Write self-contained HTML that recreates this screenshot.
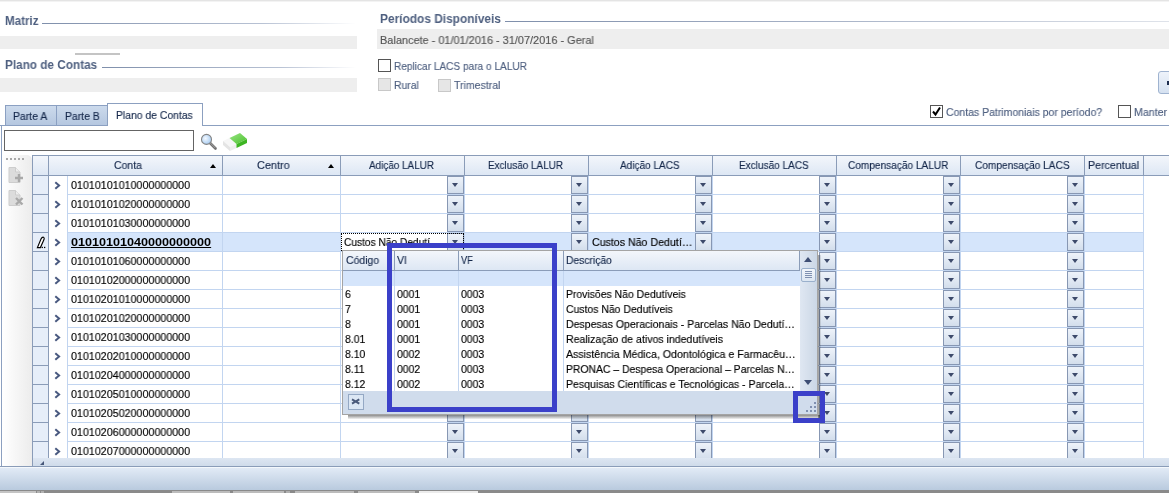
<!DOCTYPE html><html><head><meta charset="utf-8"><style>
*{margin:0;padding:0;box-sizing:border-box}
html,body{width:1169px;height:493px;overflow:hidden;background:#fff;font-family:"Liberation Sans",sans-serif;font-size:11px;color:#000;position:relative}
div,span,svg{position:absolute;white-space:nowrap}
.gl{height:1px;background:linear-gradient(to right,#7f8fab,#b8c2d4 70%,#fff)}
.bar{background:#eeeeee}
.cb{width:13px;height:13px;border:1px solid #555;background:#fff}
.cbd{width:13px;height:13px;border:1px solid #c8c8c8;background:#e6e6e6}
.tab{border:1px solid #8ba0c2;background:linear-gradient(#ccdaec,#b5c7e0)}
.hd{width:1px;height:19px;background:#8a9cb8}
.vl{width:1px;background:#c2d5f0}
.hl{height:1px;background:#c2d5f0}
.btn{width:17px;height:18px;border:1px solid #8797b3;background:linear-gradient(#eef3fa,#d3deec)}
.btn i{position:absolute;left:4px;top:6px;width:0;height:0;border-left:3.5px solid transparent;border-right:3.5px solid transparent;border-top:4px solid #3d4a6b}
</style></head><body>
<div style="left:0;top:0;width:1169px;height:1px;background:#e4e4e4"></div><div style="left:0;top:1px;width:1169px;height:1px;background:#f3f3f3"></div>
<div style="left:4.50px;top:11px;line-height:20px;font-size:12px;font-weight:bold;color:#4f6080;transform:scaleX(0.9663);transform-origin:0 0;will-change:transform;-webkit-text-stroke:0 #4f6080;">Matriz</div>
<div class="gl" style="left:42px;top:23px;width:314px"></div>
<div class="bar" style="left:0;top:36px;width:357px;height:13px"></div>
<div style="left:75px;top:53px;width:45px;height:2px;background:#c4c4c4"></div>
<div style="left:4.50px;top:55px;line-height:20px;font-size:12px;font-weight:bold;color:#4f6080;transform:scaleX(0.9805);transform-origin:0 0;will-change:transform;-webkit-text-stroke:0 #4f6080;">Plano de Contas</div>
<div class="gl" style="left:102px;top:67px;width:254px"></div>
<div class="bar" style="left:0;top:78px;width:357px;height:14px"></div>
<div style="left:379.60px;top:9px;line-height:20px;font-size:12px;font-weight:bold;color:#4f6080;transform:scaleX(0.9913);transform-origin:0 0;will-change:transform;-webkit-text-stroke:0 #4f6080;">Períodos Disponíveis</div>
<div class="gl" style="left:505px;top:21px;width:664px;background:linear-gradient(to right,#7f8fab,#a9b4c8 50%,#dfe3ea)"></div>
<div class="bar" style="left:377px;top:29px;width:792px;height:20px"></div>
<div style="left:379.60px;top:30px;line-height:20px;font-size:11px;font-weight:normal;color:#555;transform:scaleX(0.9934);transform-origin:0 0;will-change:transform;-webkit-text-stroke:0.15px #555;">Balancete - 01/01/2016 - 31/07/2016 - Geral</div>
<div class="cb" style="left:378px;top:59px"></div>
<div style="left:393.60px;top:56px;line-height:20px;font-size:11px;font-weight:normal;color:#4f6080;transform:scaleX(0.9175);transform-origin:0 0;will-change:transform;-webkit-text-stroke:0.15px #4f6080;">Replicar LACS para o LALUR</div>
<div class="cbd" style="left:378px;top:78px"></div>
<div style="left:393.60px;top:75px;line-height:20px;font-size:11px;font-weight:normal;color:#4f6080;transform:scaleX(0.9442);transform-origin:0 0;will-change:transform;-webkit-text-stroke:0.15px #4f6080;">Rural</div>
<div class="cbd" style="left:438px;top:79px"></div>
<div style="left:454.00px;top:75px;line-height:20px;font-size:11px;font-weight:normal;color:#4f6080;transform:scaleX(0.9576);transform-origin:0 0;will-change:transform;-webkit-text-stroke:0.15px #4f6080;">Trimestral</div>
<div style="left:1158px;top:71px;width:20px;height:23px;border:1px solid #9fb3d0;border-radius:3px;background:linear-gradient(#eef3fb,#d5e1f0)"></div>
<div style="left:1167px;top:81px;width:3px;height:4px;background:#1e2e50"></div>
<div class="cb" style="left:930px;top:105px"></div>
<svg style="left:931px;top:106px" width="11" height="11"><path d="M2 5.5 L4.5 8.5 L9 1.5" stroke="#000" stroke-width="2" fill="none"/></svg>
<div style="left:946.00px;top:102px;line-height:20px;font-size:11px;font-weight:normal;color:#4f6080;transform:scaleX(0.9527);transform-origin:0 0;will-change:transform;-webkit-text-stroke:0.15px #4f6080;">Contas Patrimoniais por período?</div>
<div class="cb" style="left:1118px;top:105px"></div>
<div style="left:1133.60px;top:102px;line-height:20px;font-size:11px;font-weight:normal;color:#4f6080;transform:scaleX(0.9661);transform-origin:0 0;will-change:transform;-webkit-text-stroke:0.15px #4f6080;">Manter</div>
<div style="left:0;top:125px;width:1169px;height:1px;background:#8ca0c0"></div>
<div style="left:1px;top:125px;width:1px;height:342px;background:#8ca0c0"></div>
<div class="tab" style="left:5px;top:105px;width:52px;height:21px"></div>
<div class="tab" style="left:56px;top:105px;width:52px;height:21px"></div>
<div style="left:12.60px;top:106px;line-height:20px;font-size:11px;font-weight:normal;color:#15284b;transform:scaleX(0.9505);transform-origin:0 0;will-change:transform;-webkit-text-stroke:0.15px #15284b;">Parte A</div>
<div style="left:64.70px;top:106px;line-height:20px;font-size:11px;font-weight:normal;color:#15284b;transform:scaleX(0.9492);transform-origin:0 0;will-change:transform;-webkit-text-stroke:0.15px #15284b;">Parte B</div>
<div style="left:107px;top:103px;width:96px;height:23px;border:1px solid #8ca0c0;border-bottom:none;background:#fff"></div>
<div style="left:115.90px;top:105px;line-height:20px;font-size:11px;font-weight:normal;color:#15284b;transform:scaleX(0.9434);transform-origin:0 0;will-change:transform;-webkit-text-stroke:0.15px #15284b;">Plano de Contas</div>
<div style="left:4px;top:130px;width:190px;height:21px;border:1px solid #646464;background:#fff"></div>
<svg style="left:196px;top:128px" width="26" height="26" viewBox="0 0 26 26"><defs><radialGradient id="mg" cx="0.4" cy="0.4" r="0.6"><stop offset="0" stop-color="#f4f9ff"/><stop offset="1" stop-color="#a9cdf2"/></radialGradient></defs><line x1="14" y1="15" x2="19.5" y2="20.5" stroke="#707070" stroke-width="2.6" stroke-linecap="round"/><line x1="14.3" y1="15" x2="19.3" y2="20" stroke="#b0b0b0" stroke-width="0.8"/><circle cx="10.5" cy="11.4" r="5" fill="url(#mg)" stroke="#858585" stroke-width="1.1"/></svg>
<svg style="left:220px;top:130px" width="30" height="24" viewBox="0 0 30 24"><defs><linearGradient id="eg" x1="0" y1="0" x2="1" y2="1"><stop offset="0" stop-color="#9be487"/><stop offset="1" stop-color="#48c12a"/></linearGradient></defs><polygon points="3,11 9.5,8 16.5,14 10,17" fill="#f6f6f6"/><polygon points="3,11 10,17 10,21 3,15" fill="#e4e4e4"/><polygon points="10,17 16.5,14 16.5,18 10,21" fill="#ededed"/><polygon points="9.5,8 20,3 27,9 16.5,14" fill="url(#eg)"/><polygon points="16.5,14 27,9 27,13 16.5,18" fill="#3db522"/></svg>
<div style="left:32px;top:155px;width:1137px;height:21px;background:linear-gradient(#f3f6fb,#dde7f4);border-top:1px solid #8a9cb8;border-bottom:1px solid #8a9cb8"></div>
<div style="left:32px;top:155px;width:1px;height:312px;background:#8a9cb8"></div>
<div class="hd" style="left:48px;top:156px"></div>
<div class="hd" style="left:222px;top:156px"></div>
<div class="hd" style="left:340px;top:156px"></div>
<div class="hd" style="left:464px;top:156px"></div>
<div class="hd" style="left:588px;top:156px"></div>
<div class="hd" style="left:712px;top:156px"></div>
<div class="hd" style="left:836px;top:156px"></div>
<div class="hd" style="left:960px;top:156px"></div>
<div class="hd" style="left:1084px;top:156px"></div>
<div class="hd" style="left:1143px;top:156px"></div>
<div style="left:113.70px;top:155px;line-height:20px;font-size:11px;font-weight:normal;color:#15284b;transform:scaleX(0.9492);transform-origin:0 0;will-change:transform;-webkit-text-stroke:0.15px #15284b;">Conta</div>
<div style="left:257.40px;top:155px;line-height:20px;font-size:11px;font-weight:normal;color:#15284b;transform:scaleX(0.9879);transform-origin:0 0;will-change:transform;-webkit-text-stroke:0.15px #15284b;">Centro</div>
<div style="left:369.00px;top:155px;line-height:20px;font-size:11px;font-weight:normal;color:#15284b;transform:scaleX(0.9002);transform-origin:0 0;will-change:transform;-webkit-text-stroke:0.15px #15284b;">Adição LALUR</div>
<div style="left:487.80px;top:155px;line-height:20px;font-size:11px;font-weight:normal;color:#15284b;transform:scaleX(0.9014);transform-origin:0 0;will-change:transform;-webkit-text-stroke:0.15px #15284b;">Exclusão LALUR</div>
<div style="left:619.70px;top:155px;line-height:20px;font-size:11px;font-weight:normal;color:#15284b;transform:scaleX(0.9111);transform-origin:0 0;will-change:transform;-webkit-text-stroke:0.15px #15284b;">Adição LACS</div>
<div style="left:738.50px;top:155px;line-height:20px;font-size:11px;font-weight:normal;color:#15284b;transform:scaleX(0.9121);transform-origin:0 0;will-change:transform;-webkit-text-stroke:0.15px #15284b;">Exclusão LACS</div>
<div style="left:847.50px;top:155px;line-height:20px;font-size:11px;font-weight:normal;color:#15284b;transform:scaleX(0.9178);transform-origin:0 0;will-change:transform;-webkit-text-stroke:0.15px #15284b;">Compensação LALUR</div>
<div style="left:974.70px;top:155px;line-height:20px;font-size:11px;font-weight:normal;color:#15284b;transform:scaleX(0.9210);transform-origin:0 0;will-change:transform;-webkit-text-stroke:0.15px #15284b;">Compensação LACS</div>
<div style="left:1087.80px;top:155px;line-height:20px;font-size:11px;font-weight:normal;color:#15284b;transform:scaleX(0.9704);transform-origin:0 0;will-change:transform;-webkit-text-stroke:0.15px #15284b;">Percentual</div>
<div style="left:210px;top:164px;width:0;height:0;border-left:3.5px solid transparent;border-right:3.5px solid transparent;border-bottom:4px solid #000"></div>
<div style="left:328px;top:164px;width:0;height:0;border-left:3.5px solid transparent;border-right:3.5px solid transparent;border-bottom:4px solid #000"></div>
<div style="left:33px;top:176px;width:15px;height:282px;background:#e6eef9"></div>
<div style="left:48px;top:176px;width:1px;height:282px;background:#8a9cb8"></div>
<div style="left:67px;top:233px;width:1076px;height:18px;background:#d5e5fb"></div>
<div style="left:33px;top:194px;width:15px;height:1px;background:#8a9cb8"></div>
<div class="hl" style="left:67px;top:194px;width:1076px"></div>
<div style="left:33px;top:213px;width:15px;height:1px;background:#8a9cb8"></div>
<div class="hl" style="left:67px;top:213px;width:1076px"></div>
<div style="left:33px;top:232px;width:15px;height:1px;background:#8a9cb8"></div>
<div class="hl" style="left:67px;top:232px;width:1076px"></div>
<div style="left:33px;top:251px;width:15px;height:1px;background:#8a9cb8"></div>
<div class="hl" style="left:67px;top:251px;width:1076px"></div>
<div style="left:33px;top:270px;width:15px;height:1px;background:#8a9cb8"></div>
<div class="hl" style="left:67px;top:270px;width:1076px"></div>
<div style="left:33px;top:289px;width:15px;height:1px;background:#8a9cb8"></div>
<div class="hl" style="left:67px;top:289px;width:1076px"></div>
<div style="left:33px;top:308px;width:15px;height:1px;background:#8a9cb8"></div>
<div class="hl" style="left:67px;top:308px;width:1076px"></div>
<div style="left:33px;top:327px;width:15px;height:1px;background:#8a9cb8"></div>
<div class="hl" style="left:67px;top:327px;width:1076px"></div>
<div style="left:33px;top:346px;width:15px;height:1px;background:#8a9cb8"></div>
<div class="hl" style="left:67px;top:346px;width:1076px"></div>
<div style="left:33px;top:365px;width:15px;height:1px;background:#8a9cb8"></div>
<div class="hl" style="left:67px;top:365px;width:1076px"></div>
<div style="left:33px;top:384px;width:15px;height:1px;background:#8a9cb8"></div>
<div class="hl" style="left:67px;top:384px;width:1076px"></div>
<div style="left:33px;top:403px;width:15px;height:1px;background:#8a9cb8"></div>
<div class="hl" style="left:67px;top:403px;width:1076px"></div>
<div style="left:33px;top:422px;width:15px;height:1px;background:#8a9cb8"></div>
<div class="hl" style="left:67px;top:422px;width:1076px"></div>
<div style="left:33px;top:441px;width:15px;height:1px;background:#8a9cb8"></div>
<div class="hl" style="left:67px;top:441px;width:1076px"></div>
<div class="vl" style="left:67px;top:176px;height:282px"></div>
<div class="vl" style="left:222px;top:176px;height:282px"></div>
<div class="vl" style="left:340px;top:176px;height:282px"></div>
<div class="vl" style="left:464px;top:176px;height:282px"></div>
<div class="vl" style="left:588px;top:176px;height:282px"></div>
<div class="vl" style="left:712px;top:176px;height:282px"></div>
<div class="vl" style="left:836px;top:176px;height:282px"></div>
<div class="vl" style="left:960px;top:176px;height:282px"></div>
<div class="vl" style="left:1084px;top:176px;height:282px"></div>
<div class="vl" style="left:1143px;top:176px;height:282px"></div>
<svg style="left:53px;top:180px" width="10" height="10"><path d="M2.3 2.2 L6.1 5.5 L2.3 8.8" stroke="#4a5a80" stroke-width="2" fill="none"/></svg>
<div style="left:70.70px;top:175px;line-height:20px;font-size:11px;font-weight:normal;color:#000;transform:scaleX(0.9735);transform-origin:0 0;will-change:transform;-webkit-text-stroke:0.15px #000;">01010101010000000000</div>
<div class="btn" style="left:447px;top:176px"><i></i></div>
<div class="btn" style="left:571px;top:176px"><i></i></div>
<div class="btn" style="left:695px;top:176px"><i></i></div>
<div class="btn" style="left:819px;top:176px"><i></i></div>
<div class="btn" style="left:943px;top:176px"><i></i></div>
<div class="btn" style="left:1067px;top:176px"><i></i></div>
<svg style="left:53px;top:199px" width="10" height="10"><path d="M2.3 2.2 L6.1 5.5 L2.3 8.8" stroke="#4a5a80" stroke-width="2" fill="none"/></svg>
<div style="left:70.70px;top:194px;line-height:20px;font-size:11px;font-weight:normal;color:#000;transform:scaleX(0.9735);transform-origin:0 0;will-change:transform;-webkit-text-stroke:0.15px #000;">01010101020000000000</div>
<div class="btn" style="left:447px;top:195px"><i></i></div>
<div class="btn" style="left:571px;top:195px"><i></i></div>
<div class="btn" style="left:695px;top:195px"><i></i></div>
<div class="btn" style="left:819px;top:195px"><i></i></div>
<div class="btn" style="left:943px;top:195px"><i></i></div>
<div class="btn" style="left:1067px;top:195px"><i></i></div>
<svg style="left:53px;top:218px" width="10" height="10"><path d="M2.3 2.2 L6.1 5.5 L2.3 8.8" stroke="#4a5a80" stroke-width="2" fill="none"/></svg>
<div style="left:70.70px;top:213px;line-height:20px;font-size:11px;font-weight:normal;color:#000;transform:scaleX(0.9735);transform-origin:0 0;will-change:transform;-webkit-text-stroke:0.15px #000;">01010101030000000000</div>
<div class="btn" style="left:447px;top:214px"><i></i></div>
<div class="btn" style="left:571px;top:214px"><i></i></div>
<div class="btn" style="left:695px;top:214px"><i></i></div>
<div class="btn" style="left:819px;top:214px"><i></i></div>
<div class="btn" style="left:943px;top:214px"><i></i></div>
<div class="btn" style="left:1067px;top:214px"><i></i></div>
<svg style="left:53px;top:237px" width="10" height="10"><path d="M2.3 2.2 L6.1 5.5 L2.3 8.8" stroke="#4a5a80" stroke-width="2" fill="none"/></svg>
<div style="left:70.70px;top:232px;line-height:20px;font-size:11px;font-weight:bold;color:#000;transform:scaleX(1.1453);transform-origin:0 0;will-change:transform;-webkit-text-stroke:0 #000;text-decoration:underline">01010101040000000000</div>
<div class="btn" style="left:447px;top:233px"><i></i></div>
<div class="btn" style="left:571px;top:233px"><i></i></div>
<div class="btn" style="left:695px;top:233px"><i></i></div>
<div class="btn" style="left:819px;top:233px"><i></i></div>
<div class="btn" style="left:943px;top:233px"><i></i></div>
<div class="btn" style="left:1067px;top:233px"><i></i></div>
<svg style="left:53px;top:256px" width="10" height="10"><path d="M2.3 2.2 L6.1 5.5 L2.3 8.8" stroke="#4a5a80" stroke-width="2" fill="none"/></svg>
<div style="left:70.70px;top:251px;line-height:20px;font-size:11px;font-weight:normal;color:#000;transform:scaleX(0.9735);transform-origin:0 0;will-change:transform;-webkit-text-stroke:0.15px #000;">01010101060000000000</div>
<div class="btn" style="left:447px;top:252px"><i></i></div>
<div class="btn" style="left:571px;top:252px"><i></i></div>
<div class="btn" style="left:695px;top:252px"><i></i></div>
<div class="btn" style="left:819px;top:252px"><i></i></div>
<div class="btn" style="left:943px;top:252px"><i></i></div>
<div class="btn" style="left:1067px;top:252px"><i></i></div>
<svg style="left:53px;top:275px" width="10" height="10"><path d="M2.3 2.2 L6.1 5.5 L2.3 8.8" stroke="#4a5a80" stroke-width="2" fill="none"/></svg>
<div style="left:70.70px;top:270px;line-height:20px;font-size:11px;font-weight:normal;color:#000;transform:scaleX(0.9735);transform-origin:0 0;will-change:transform;-webkit-text-stroke:0.15px #000;">01010102000000000000</div>
<div class="btn" style="left:447px;top:271px"><i></i></div>
<div class="btn" style="left:571px;top:271px"><i></i></div>
<div class="btn" style="left:695px;top:271px"><i></i></div>
<div class="btn" style="left:819px;top:271px"><i></i></div>
<div class="btn" style="left:943px;top:271px"><i></i></div>
<div class="btn" style="left:1067px;top:271px"><i></i></div>
<svg style="left:53px;top:294px" width="10" height="10"><path d="M2.3 2.2 L6.1 5.5 L2.3 8.8" stroke="#4a5a80" stroke-width="2" fill="none"/></svg>
<div style="left:70.70px;top:289px;line-height:20px;font-size:11px;font-weight:normal;color:#000;transform:scaleX(0.9735);transform-origin:0 0;will-change:transform;-webkit-text-stroke:0.15px #000;">01010201010000000000</div>
<div class="btn" style="left:447px;top:290px"><i></i></div>
<div class="btn" style="left:571px;top:290px"><i></i></div>
<div class="btn" style="left:695px;top:290px"><i></i></div>
<div class="btn" style="left:819px;top:290px"><i></i></div>
<div class="btn" style="left:943px;top:290px"><i></i></div>
<div class="btn" style="left:1067px;top:290px"><i></i></div>
<svg style="left:53px;top:313px" width="10" height="10"><path d="M2.3 2.2 L6.1 5.5 L2.3 8.8" stroke="#4a5a80" stroke-width="2" fill="none"/></svg>
<div style="left:70.70px;top:308px;line-height:20px;font-size:11px;font-weight:normal;color:#000;transform:scaleX(0.9735);transform-origin:0 0;will-change:transform;-webkit-text-stroke:0.15px #000;">01010201020000000000</div>
<div class="btn" style="left:447px;top:309px"><i></i></div>
<div class="btn" style="left:571px;top:309px"><i></i></div>
<div class="btn" style="left:695px;top:309px"><i></i></div>
<div class="btn" style="left:819px;top:309px"><i></i></div>
<div class="btn" style="left:943px;top:309px"><i></i></div>
<div class="btn" style="left:1067px;top:309px"><i></i></div>
<svg style="left:53px;top:332px" width="10" height="10"><path d="M2.3 2.2 L6.1 5.5 L2.3 8.8" stroke="#4a5a80" stroke-width="2" fill="none"/></svg>
<div style="left:70.70px;top:327px;line-height:20px;font-size:11px;font-weight:normal;color:#000;transform:scaleX(0.9735);transform-origin:0 0;will-change:transform;-webkit-text-stroke:0.15px #000;">01010201030000000000</div>
<div class="btn" style="left:447px;top:328px"><i></i></div>
<div class="btn" style="left:571px;top:328px"><i></i></div>
<div class="btn" style="left:695px;top:328px"><i></i></div>
<div class="btn" style="left:819px;top:328px"><i></i></div>
<div class="btn" style="left:943px;top:328px"><i></i></div>
<div class="btn" style="left:1067px;top:328px"><i></i></div>
<svg style="left:53px;top:351px" width="10" height="10"><path d="M2.3 2.2 L6.1 5.5 L2.3 8.8" stroke="#4a5a80" stroke-width="2" fill="none"/></svg>
<div style="left:70.70px;top:346px;line-height:20px;font-size:11px;font-weight:normal;color:#000;transform:scaleX(0.9735);transform-origin:0 0;will-change:transform;-webkit-text-stroke:0.15px #000;">01010202010000000000</div>
<div class="btn" style="left:447px;top:347px"><i></i></div>
<div class="btn" style="left:571px;top:347px"><i></i></div>
<div class="btn" style="left:695px;top:347px"><i></i></div>
<div class="btn" style="left:819px;top:347px"><i></i></div>
<div class="btn" style="left:943px;top:347px"><i></i></div>
<div class="btn" style="left:1067px;top:347px"><i></i></div>
<svg style="left:53px;top:370px" width="10" height="10"><path d="M2.3 2.2 L6.1 5.5 L2.3 8.8" stroke="#4a5a80" stroke-width="2" fill="none"/></svg>
<div style="left:70.70px;top:365px;line-height:20px;font-size:11px;font-weight:normal;color:#000;transform:scaleX(0.9735);transform-origin:0 0;will-change:transform;-webkit-text-stroke:0.15px #000;">01010204000000000000</div>
<div class="btn" style="left:447px;top:366px"><i></i></div>
<div class="btn" style="left:571px;top:366px"><i></i></div>
<div class="btn" style="left:695px;top:366px"><i></i></div>
<div class="btn" style="left:819px;top:366px"><i></i></div>
<div class="btn" style="left:943px;top:366px"><i></i></div>
<div class="btn" style="left:1067px;top:366px"><i></i></div>
<svg style="left:53px;top:389px" width="10" height="10"><path d="M2.3 2.2 L6.1 5.5 L2.3 8.8" stroke="#4a5a80" stroke-width="2" fill="none"/></svg>
<div style="left:70.70px;top:384px;line-height:20px;font-size:11px;font-weight:normal;color:#000;transform:scaleX(0.9735);transform-origin:0 0;will-change:transform;-webkit-text-stroke:0.15px #000;">01010205010000000000</div>
<div class="btn" style="left:447px;top:385px"><i></i></div>
<div class="btn" style="left:571px;top:385px"><i></i></div>
<div class="btn" style="left:695px;top:385px"><i></i></div>
<div class="btn" style="left:819px;top:385px"><i></i></div>
<div class="btn" style="left:943px;top:385px"><i></i></div>
<div class="btn" style="left:1067px;top:385px"><i></i></div>
<svg style="left:53px;top:408px" width="10" height="10"><path d="M2.3 2.2 L6.1 5.5 L2.3 8.8" stroke="#4a5a80" stroke-width="2" fill="none"/></svg>
<div style="left:70.70px;top:403px;line-height:20px;font-size:11px;font-weight:normal;color:#000;transform:scaleX(0.9735);transform-origin:0 0;will-change:transform;-webkit-text-stroke:0.15px #000;">01010205020000000000</div>
<div class="btn" style="left:447px;top:404px"><i></i></div>
<div class="btn" style="left:571px;top:404px"><i></i></div>
<div class="btn" style="left:695px;top:404px"><i></i></div>
<div class="btn" style="left:819px;top:404px"><i></i></div>
<div class="btn" style="left:943px;top:404px"><i></i></div>
<div class="btn" style="left:1067px;top:404px"><i></i></div>
<svg style="left:53px;top:427px" width="10" height="10"><path d="M2.3 2.2 L6.1 5.5 L2.3 8.8" stroke="#4a5a80" stroke-width="2" fill="none"/></svg>
<div style="left:70.70px;top:422px;line-height:20px;font-size:11px;font-weight:normal;color:#000;transform:scaleX(0.9735);transform-origin:0 0;will-change:transform;-webkit-text-stroke:0.15px #000;">01010206000000000000</div>
<div class="btn" style="left:447px;top:423px"><i></i></div>
<div class="btn" style="left:571px;top:423px"><i></i></div>
<div class="btn" style="left:695px;top:423px"><i></i></div>
<div class="btn" style="left:819px;top:423px"><i></i></div>
<div class="btn" style="left:943px;top:423px"><i></i></div>
<div class="btn" style="left:1067px;top:423px"><i></i></div>
<svg style="left:53px;top:446px" width="10" height="10"><path d="M2.3 2.2 L6.1 5.5 L2.3 8.8" stroke="#4a5a80" stroke-width="2" fill="none"/></svg>
<div class="btn" style="left:447px;top:442px"><i></i></div>
<div class="btn" style="left:571px;top:442px"><i></i></div>
<div class="btn" style="left:695px;top:442px"><i></i></div>
<div class="btn" style="left:819px;top:442px"><i></i></div>
<div class="btn" style="left:943px;top:442px"><i></i></div>
<div class="btn" style="left:1067px;top:442px"><i></i></div>
<div style="left:70.70px;top:441px;line-height:20px;font-size:11px;font-weight:normal;color:#000;transform:scaleX(0.9735);transform-origin:0 0;will-change:transform;-webkit-text-stroke:0.15px #000;">01010207000000000000</div>
<div style="left:33px;top:233px;width:15px;height:18px;background:#e6eef9"></div>
<svg style="left:34px;top:234px" width="14" height="16"><path d="M3.4 13.6 L7 5 Q8 2.9 9.5 3.2 Q10.7 3.8 10 5.6 L6.4 13.6 Z" stroke="#000" stroke-width="1.15" fill="#fff"/><rect x="7.6" y="12.8" width="1.3" height="1.3" fill="#000"/><rect x="10" y="12.8" width="1.3" height="1.3" fill="#000"/></svg>
<div style="left:591.70px;top:232px;line-height:20px;font-size:11px;font-weight:normal;color:#000;transform:scaleX(0.9656);transform-origin:0 0;will-change:transform;-webkit-text-stroke:0.15px #000;">Custos Não Dedutí…</div>
<div style="left:341px;top:233px;width:123px;height:18px;background:#fff"></div>
<div class="btn" style="left:447px;top:233px"><i></i></div>
<div style="left:343.60px;top:232px;line-height:20px;font-size:11px;font-weight:normal;color:#000;transform:scaleX(0.9250);transform-origin:0 0;will-change:transform;-webkit-text-stroke:0.15px #000;">Custos Não Dedutí</div>
<div style="left:341px;top:233px;width:123px;height:18px;border:1px dotted #000"></div>
<div style="left:33px;top:458px;width:1136px;height:8px;background:linear-gradient(#dde6f2,#cfdbea)"></div>
<div style="left:40px;top:461px;width:0;height:0;border-left:4px solid transparent;border-bottom:4px solid #475779"></div>
<div style="left:3px;top:155px;width:29px;height:311px;background:linear-gradient(to right,#fff,#ececec);border-top-right-radius:5px"></div>
<div style="left:6px;top:158px;width:2px;height:2px;background:#a8a8a8"></div>
<div style="left:10px;top:158px;width:2px;height:2px;background:#a8a8a8"></div>
<div style="left:14px;top:158px;width:2px;height:2px;background:#a8a8a8"></div>
<div style="left:18px;top:158px;width:2px;height:2px;background:#a8a8a8"></div>
<div style="left:22px;top:158px;width:2px;height:2px;background:#a8a8a8"></div>
<svg style="left:8px;top:167px" width="17" height="17"><path d="M1 0.5 H7.5 L12 5 V15.5 H1 Z" fill="#dcdcdc" stroke="#cdcdcd"/><path d="M7.5 0.5 V5 H12" fill="#eee" stroke="#cdcdcd"/><path d="M11 7 V15 M7 11 H15" stroke="#a9a9a9" stroke-width="2.4"/></svg>
<svg style="left:8px;top:190px" width="17" height="17"><path d="M1 0.5 H7.5 L12 5 V15.5 H1 Z" fill="#dcdcdc" stroke="#cdcdcd"/><path d="M7.5 0.5 V5 H12" fill="#eee" stroke="#cdcdcd"/><path d="M8 8 L14.5 14.5 M14.5 8 L8 14.5" stroke="#a9a9a9" stroke-width="2.4"/></svg>
<div style="left:348px;top:415px;width:473px;height:4px;background:linear-gradient(rgba(0,0,0,0.45),rgba(0,0,0,0.05))"></div>
<div style="left:818px;top:255px;width:3px;height:164px;background:linear-gradient(to right,rgba(0,0,0,0.4),rgba(0,0,0,0.05))"></div>
<div style="left:342px;top:250px;width:476px;height:165px;background:#fff;border:1px solid #a4a4a4;overflow:hidden"><div style="left:0;top:0;width:457px;height:20px;background:linear-gradient(#f3f6fb,#dde7f4);border-bottom:1px solid #8a9cb8;border-right:1px solid #8a9cb8"></div><div style="left:0;top:20px;width:457px;height:15px;background:#d5e5fb"></div><div style="left:51px;top:0;width:1px;height:20px;background:#8a9cb8"></div><div style="left:115px;top:0;width:1px;height:20px;background:#8a9cb8"></div><div style="left:220px;top:0;width:1px;height:20px;background:#8a9cb8"></div><div style="left:51px;top:20px;width:1px;height:120px;background:#c2d5f0"></div><div style="left:115px;top:20px;width:1px;height:120px;background:#c2d5f0"></div><div style="left:220px;top:20px;width:1px;height:120px;background:#c2d5f0"></div><div style="left:457px;top:0;width:17px;height:140px;background:linear-gradient(to right,#dfe7f2,#cbd7e6)"></div><div style="left:0;top:140px;width:476px;height:25px;background:#d0dcec"></div></div>
<div style="left:804px;top:257px;width:0;height:0;border-left:4.5px solid transparent;border-right:4.5px solid transparent;border-bottom:5px solid #3e4e74"></div>
<div style="left:804px;top:380px;width:0;height:0;border-left:4.5px solid transparent;border-right:4.5px solid transparent;border-top:5px solid #3e4e74"></div>
<div style="left:801px;top:268px;width:15px;height:14px;border:1px solid #9ab0cc;border-radius:2px;background:linear-gradient(#f2f6fb,#dce6f2)"></div>
<div style="left:805px;top:271px;width:7px;height:1px;background:#7f90b0"></div>
<div style="left:805px;top:273px;width:7px;height:1px;background:#7f90b0"></div>
<div style="left:805px;top:275px;width:7px;height:1px;background:#7f90b0"></div>
<div style="left:805px;top:277px;width:7px;height:1px;background:#7f90b0"></div>
<div style="left:348px;top:394px;width:16px;height:16px;border:1px solid #94a8c4;background:#dce7f4"></div>
<svg style="left:348px;top:394px" width="16" height="16"><path d="M4 5.4 L11.3 9.6 M11.3 5.4 L4 9.6" stroke="#4a5a7a" stroke-width="1.9"/></svg>
<div style="left:814px;top:402px;width:2px;height:2px;background:#7f90b0"></div>
<div style="left:810px;top:406px;width:2px;height:2px;background:#7f90b0"></div>
<div style="left:814px;top:406px;width:2px;height:2px;background:#7f90b0"></div>
<div style="left:806px;top:410px;width:2px;height:2px;background:#7f90b0"></div>
<div style="left:810px;top:410px;width:2px;height:2px;background:#7f90b0"></div>
<div style="left:814px;top:410px;width:2px;height:2px;background:#7f90b0"></div>
<div style="left:345.50px;top:250px;line-height:20px;font-size:11px;font-weight:normal;color:#15284b;transform:scaleX(0.9499);transform-origin:0 0;will-change:transform;-webkit-text-stroke:0.15px #15284b;">Código</div>
<div style="left:397.30px;top:250px;line-height:20px;font-size:11px;font-weight:normal;color:#15284b;transform:scaleX(0.9481);transform-origin:0 0;will-change:transform;-webkit-text-stroke:0.15px #15284b;">VI</div>
<div style="left:461.30px;top:250px;line-height:20px;font-size:11px;font-weight:normal;color:#15284b;transform:scaleX(0.8370);transform-origin:0 0;will-change:transform;-webkit-text-stroke:0.15px #15284b;">VF</div>
<div style="left:566.40px;top:250px;line-height:20px;font-size:11px;font-weight:normal;color:#15284b;transform:scaleX(0.9367);transform-origin:0 0;will-change:transform;-webkit-text-stroke:0.15px #15284b;">Descrição</div>
<div style="left:344.80px;top:284px;line-height:20px;font-size:11px;font-weight:normal;color:#000;transform:scaleX(0.9500);transform-origin:0 0;will-change:transform;-webkit-text-stroke:0.15px #000;">6</div>
<div style="left:396.60px;top:284px;line-height:20px;font-size:11px;font-weight:normal;color:#000;transform:scaleX(0.9500);transform-origin:0 0;will-change:transform;-webkit-text-stroke:0.15px #000;">0001</div>
<div style="left:460.90px;top:284px;line-height:20px;font-size:11px;font-weight:normal;color:#000;transform:scaleX(0.9500);transform-origin:0 0;will-change:transform;-webkit-text-stroke:0.15px #000;">0003</div>
<div style="left:565.70px;top:284px;line-height:20px;font-size:11px;font-weight:normal;color:#000;transform:scaleX(0.9468);transform-origin:0 0;will-change:transform;-webkit-text-stroke:0.15px #000;">Provisões Não Dedutíveis</div>
<div style="left:344.80px;top:299px;line-height:20px;font-size:11px;font-weight:normal;color:#000;transform:scaleX(0.9500);transform-origin:0 0;will-change:transform;-webkit-text-stroke:0.15px #000;">7</div>
<div style="left:396.60px;top:299px;line-height:20px;font-size:11px;font-weight:normal;color:#000;transform:scaleX(0.9500);transform-origin:0 0;will-change:transform;-webkit-text-stroke:0.15px #000;">0001</div>
<div style="left:460.90px;top:299px;line-height:20px;font-size:11px;font-weight:normal;color:#000;transform:scaleX(0.9500);transform-origin:0 0;will-change:transform;-webkit-text-stroke:0.15px #000;">0003</div>
<div style="left:565.70px;top:299px;line-height:20px;font-size:11px;font-weight:normal;color:#000;transform:scaleX(0.9487);transform-origin:0 0;will-change:transform;-webkit-text-stroke:0.15px #000;">Custos Não Dedutíveis</div>
<div style="left:344.80px;top:314px;line-height:20px;font-size:11px;font-weight:normal;color:#000;transform:scaleX(0.9500);transform-origin:0 0;will-change:transform;-webkit-text-stroke:0.15px #000;">8</div>
<div style="left:396.60px;top:314px;line-height:20px;font-size:11px;font-weight:normal;color:#000;transform:scaleX(0.9500);transform-origin:0 0;will-change:transform;-webkit-text-stroke:0.15px #000;">0001</div>
<div style="left:460.90px;top:314px;line-height:20px;font-size:11px;font-weight:normal;color:#000;transform:scaleX(0.9500);transform-origin:0 0;will-change:transform;-webkit-text-stroke:0.15px #000;">0003</div>
<div style="left:565.70px;top:314px;line-height:20px;font-size:11px;font-weight:normal;color:#000;transform:scaleX(0.9578);transform-origin:0 0;will-change:transform;-webkit-text-stroke:0.15px #000;">Despesas Operacionais - Parcelas Não Dedutí…</div>
<div style="left:344.80px;top:329px;line-height:20px;font-size:11px;font-weight:normal;color:#000;transform:scaleX(0.9500);transform-origin:0 0;will-change:transform;-webkit-text-stroke:0.15px #000;">8.01</div>
<div style="left:396.60px;top:329px;line-height:20px;font-size:11px;font-weight:normal;color:#000;transform:scaleX(0.9500);transform-origin:0 0;will-change:transform;-webkit-text-stroke:0.15px #000;">0001</div>
<div style="left:460.90px;top:329px;line-height:20px;font-size:11px;font-weight:normal;color:#000;transform:scaleX(0.9500);transform-origin:0 0;will-change:transform;-webkit-text-stroke:0.15px #000;">0003</div>
<div style="left:565.70px;top:329px;line-height:20px;font-size:11px;font-weight:normal;color:#000;transform:scaleX(0.9617);transform-origin:0 0;will-change:transform;-webkit-text-stroke:0.15px #000;">Realização de ativos indedutíveis</div>
<div style="left:344.80px;top:344px;line-height:20px;font-size:11px;font-weight:normal;color:#000;transform:scaleX(0.9500);transform-origin:0 0;will-change:transform;-webkit-text-stroke:0.15px #000;">8.10</div>
<div style="left:396.60px;top:344px;line-height:20px;font-size:11px;font-weight:normal;color:#000;transform:scaleX(0.9500);transform-origin:0 0;will-change:transform;-webkit-text-stroke:0.15px #000;">0002</div>
<div style="left:460.90px;top:344px;line-height:20px;font-size:11px;font-weight:normal;color:#000;transform:scaleX(0.9500);transform-origin:0 0;will-change:transform;-webkit-text-stroke:0.15px #000;">0003</div>
<div style="left:565.70px;top:344px;line-height:20px;font-size:11px;font-weight:normal;color:#000;transform:scaleX(0.9657);transform-origin:0 0;will-change:transform;-webkit-text-stroke:0.15px #000;">Assistência Médica, Odontológica e Farmacêu…</div>
<div style="left:344.80px;top:359px;line-height:20px;font-size:11px;font-weight:normal;color:#000;transform:scaleX(0.9500);transform-origin:0 0;will-change:transform;-webkit-text-stroke:0.15px #000;">8.11</div>
<div style="left:396.60px;top:359px;line-height:20px;font-size:11px;font-weight:normal;color:#000;transform:scaleX(0.9500);transform-origin:0 0;will-change:transform;-webkit-text-stroke:0.15px #000;">0002</div>
<div style="left:460.90px;top:359px;line-height:20px;font-size:11px;font-weight:normal;color:#000;transform:scaleX(0.9500);transform-origin:0 0;will-change:transform;-webkit-text-stroke:0.15px #000;">0003</div>
<div style="left:565.70px;top:359px;line-height:20px;font-size:11px;font-weight:normal;color:#000;transform:scaleX(0.9457);transform-origin:0 0;will-change:transform;-webkit-text-stroke:0.15px #000;">PRONAC – Despesa Operacional – Parcelas N…</div>
<div style="left:344.80px;top:374px;line-height:20px;font-size:11px;font-weight:normal;color:#000;transform:scaleX(0.9500);transform-origin:0 0;will-change:transform;-webkit-text-stroke:0.15px #000;">8.12</div>
<div style="left:396.60px;top:374px;line-height:20px;font-size:11px;font-weight:normal;color:#000;transform:scaleX(0.9500);transform-origin:0 0;will-change:transform;-webkit-text-stroke:0.15px #000;">0002</div>
<div style="left:460.90px;top:374px;line-height:20px;font-size:11px;font-weight:normal;color:#000;transform:scaleX(0.9500);transform-origin:0 0;will-change:transform;-webkit-text-stroke:0.15px #000;">0003</div>
<div style="left:565.70px;top:374px;line-height:20px;font-size:11px;font-weight:normal;color:#000;transform:scaleX(0.9578);transform-origin:0 0;will-change:transform;-webkit-text-stroke:0.15px #000;">Pesquisas Científicas e Tecnológicas - Parcela…</div>
<div style="left:387px;top:243px;width:170px;height:169px;border:5px solid #3b40c9"></div>
<div style="left:793px;top:391px;width:32px;height:32px;border:5px solid #3b40c9"></div>
<div style="left:0;top:466px;width:1169px;height:1px;background:#8a9cb8"></div>
<div style="left:0;top:467px;width:1169px;height:23px;background:linear-gradient(#e3ecf7,#b9cade)"></div>
<div style="left:0;top:467px;width:1169px;height:1px;background:#f4f8fc"></div>
<div style="left:0;top:490px;width:1169px;height:3px;background:#8a8a8a"></div>
<div style="left:0px;top:491px;width:36px;height:2px;background:#c4c4c4"></div>
<div style="left:37px;top:491px;width:3px;height:2px;background:#b0b0b0"></div>
<div style="left:41px;top:491px;width:3px;height:2px;background:#b0b0b0"></div>
<div style="left:172px;top:491px;width:58px;height:2px;background:#bcbcbc"></div>
<div style="left:233px;top:491px;width:51px;height:2px;background:#bcbcbc"></div>
<div style="left:286px;top:491px;width:4px;height:2px;background:#b0b0b0"></div>
<div style="left:295px;top:491px;width:59px;height:2px;background:#bcbcbc"></div>
<div style="left:358px;top:491px;width:57px;height:2px;background:#bcbcbc"></div>
<div style="left:419px;top:491px;width:59px;height:2px;background:#ececec"></div>
</body></html>
